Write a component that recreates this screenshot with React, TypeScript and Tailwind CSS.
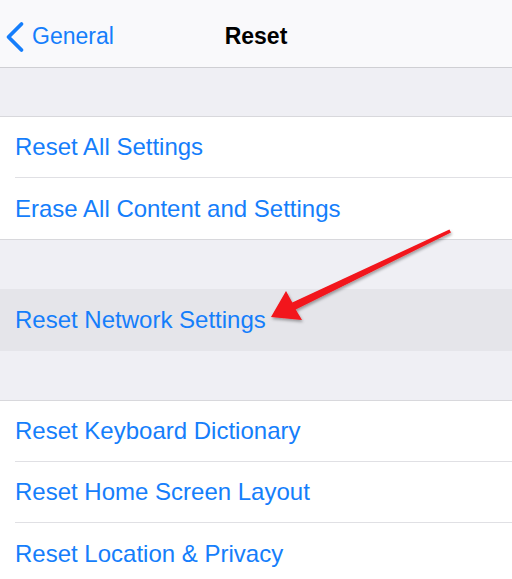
import React from 'react';

const Row = ({ label, last }: { label: string; last?: boolean }) => (
  <div className="bg-white pl-[15px]">
    <div className={`h-[61px] flex items-center ${last ? '' : 'border-b border-[#e0e0e4]'}`}>
      <span className="text-[24px] text-[#157efb] leading-none">{label}</span>
    </div>
  </div>
);

const App: React.FC = () => {
  return (
    <div
      className="relative w-[512px] h-[579px] overflow-hidden bg-[#efeff4]"
      style={{ fontFamily: '"Liberation Sans", Arial, sans-serif' }}
    >
      {/* nav bar */}
      <div className="relative h-[68px] bg-[#f9f9fb] border-b border-[#cfcfd3] flex items-center pt-[6px]">
        <div className="flex items-center pl-[5px] gap-[7px] text-[#157efb]">
          <svg width="20" height="32" viewBox="0 0 20 32">
            <path d="M16.5 3 L3.5 16 L16.5 29" fill="none" stroke="#157efb" strokeWidth="3.8" strokeLinecap="round" strokeLinejoin="round" />
          </svg>
          <span className="text-[23px] leading-none">General</span>
        </div>
        <div className="absolute inset-0 pt-[6px] flex items-center justify-center pointer-events-none">
          <span className="text-[23px] font-bold text-black leading-none">Reset</span>
        </div>
      </div>

      <div className="h-[48px]" />

      <div className="border-t border-[#d8d8dc] border-b">
        <Row label="Reset All Settings" />
        <Row label="Erase All Content and Settings" last />
      </div>

      <div className="h-[49px]" />

      <div className="h-[62px] bg-[#e5e5ea] pl-[15px] flex items-center">
        <span className="text-[24px] text-[#157efb] leading-none">Reset Network Settings</span>
      </div>

      <div className="h-[49px]" />

      <div className="border-t border-[#d8d8dc]">
        <Row label="Reset Keyboard Dictionary" />
        <Row label="Reset Home Screen Layout" />
        <Row label="Reset Location & Privacy" last />
      </div>

      {/* red annotation arrow */}
      <svg className="absolute left-0 top-0 pointer-events-none" width="512" height="579" viewBox="0 0 512 579">
        <defs>
          <filter id="sh" x="-10%" y="-10%" width="130%" height="130%">
            <feDropShadow dx="1" dy="2" stdDeviation="1.5" floodColor="#000" floodOpacity="0.35" />
          </filter>
        </defs>
        <polygon
          points="271,317 286,291 292.3,302.4 449.4,229.6 451,232.5 295.7,309.6 302,320"
          fill="#f2141b"
          filter="url(#sh)"
        />
      </svg>
    </div>
  );
};

export default App;
